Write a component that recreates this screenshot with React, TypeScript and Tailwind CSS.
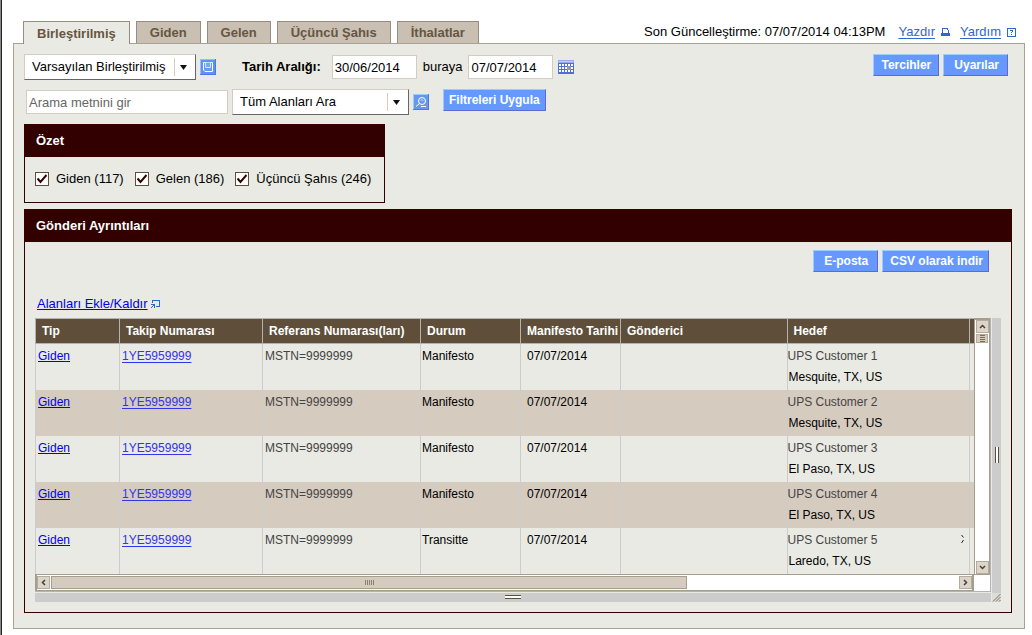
import { useState } from 'react';

interface Shipment {
  type: string;
  tracking: string;
  reference: string;
  status: string;
  date: string;
  sender: string;
  customer: string;
  city: string;
}

const tabs = ['Birleştirilmiş', 'Giden', 'Gelen', 'Üçüncü Şahıs', 'İthalatlar'];

const summary = [
  { id: 'outbound', label: 'Giden (117)' },
  { id: 'inbound', label: 'Gelen (186)' },
  { id: 'third', label: 'Üçüncü Şahıs (246)' },
];

const columns = [
  { title: 'Tip', width: 'w-[84px]' },
  { title: 'Takip Numarası', width: 'w-[143px]' },
  { title: 'Referans Numarası(ları)', width: 'w-[158px]' },
  { title: 'Durum', width: 'w-[100px]' },
  { title: 'Manifesto Tarihi', width: 'w-[100px]' },
  { title: 'Gönderici', width: '' },
  { title: 'Hedef', width: 'w-[182px]' },
];

const base = { type: 'Giden', tracking: '1YE5959999', reference: 'MSTN=9999999', date: '07/07/2014', sender: '' };

const shipments: Shipment[] = [
  { ...base, status: 'Manifesto', customer: 'UPS Customer 1', city: 'Mesquite, TX, US' },
  { ...base, status: 'Manifesto', customer: 'UPS Customer 2', city: 'Mesquite, TX, US' },
  { ...base, status: 'Manifesto', customer: 'UPS Customer 3', city: 'El Paso, TX, US' },
  { ...base, status: 'Manifesto', customer: 'UPS Customer 4', city: 'El Paso, TX, US' },
  { ...base, status: 'Transitte', customer: 'UPS Customer 5', city: 'Laredo, TX, US' },
];

function ActionButton({ children, className = 'px-[7px]' }: { children: string; className?: string }) {
  return (
    <button
      type="button"
      className={`h-[22px] whitespace-nowrap border border-t-[#99ccff] border-l-[#99ccff] border-r-[#6666cc] border-b-[#6666cc] bg-[#6699ff] text-xs leading-5 font-bold text-white ${className}`}
    >
      {children}
    </button>
  );
}

function SelectBox({ label, option, width }: { label: string; option: string; width: string }) {
  return (
    <div className={`relative h-[26px] ${width}`}>
      <select
        aria-label={label}
        className="h-full w-full appearance-none border border-t-[#d5cbbf] border-l-[#d5cbbf] border-r-[#666] border-b-[#666] bg-white pr-7 pl-[7px] text-[13px] text-black"
      >
        <option>{option}</option>
      </select>
      <div className="pointer-events-none absolute inset-y-1 right-1 flex w-[18px] items-center justify-center border-l border-[#d5cbbf]">
        <svg width="7" height="5" viewBox="0 0 7 5">
          <path d="M0 0H7L3.5 5Z" fill="#111" />
        </svg>
      </div>
    </div>
  );
}

function SaveIcon() {
  return (
    <svg width="16" height="16" viewBox="0 0 16 16">
      <rect width="16" height="16" fill="#4a7bd8" />
      <rect width="15" height="15" fill="#99bbff" />
      <rect x="1" y="1" width="14" height="14" fill="#5f92f8" />
      <path d="M3.5 3.5H12.5V12.5H5L3.5 11Z" fill="#6699ff" stroke="#fff" />
      <path d="M5.5 3.5V8.5H10.5V3.5" fill="#7aa6fb" stroke="#d6e4ff" />
    </svg>
  );
}

function SearchIcon() {
  return (
    <svg width="16" height="16" viewBox="0 0 16 16">
      <rect width="16" height="16" fill="#4a7bd8" />
      <rect width="15" height="15" fill="#99ccff" />
      <rect x="1" y="1" width="14" height="14" fill="#6699ee" />
      <circle cx="9" cy="7" r="3.5" fill="none" stroke="#fff" />
      <path d="M8 6.5C8 5.500 10 5.500 10 6.500" fill="none" stroke="#d6e4ff" />
      <path d="M6.5 9.5L3 12.5M8 12.5H13" stroke="#fff" />
    </svg>
  );
}

function CalendarIcon() {
  return (
    <svg width="16" height="14" viewBox="0 0 16 14" shapeRendering="crispEdges">
      <rect width="16" height="14" fill="#4f6fd8" />
      <rect width="16" height="3" fill="#99aaee" />
      <rect x="1" y="1" width="14" height="1" fill="#bbccff" />
      {[4, 7, 10].map((y) => (
        <path key={y} d={`M1 ${y + 1}H15`} stroke="#fff" strokeWidth="2" strokeDasharray="2 1" />
      ))}
      <rect x="9" y="6" width="4" height="4" fill="#999" />
    </svg>
  );
}

function Arrow({ d }: { d: string }) {
  return (
    <svg width="7" height="7" viewBox="0 0 7 7">
      <path d={d} fill="none" stroke="#4a4030" strokeWidth="1.5" />
    </svg>
  );
}

const arrowButton = 'flex size-[13px] shrink-0 items-center justify-center border border-[#b5ab9b] bg-[#dcd5cb]';

function VerticalScroll() {
  return (
    <div className="flex w-4 shrink-0 flex-col items-center justify-between border-x border-t-2 border-b border-[#a69d8c] bg-white">
      <div className="flex flex-col items-center gap-px">
        <button type="button" aria-label="Yukarı" className={arrowButton}><Arrow d="M1 5L3.5 2.5L6 5" /></button>
        <svg width="12" height="9" viewBox="0 0 12 9" shapeRendering="crispEdges">
          <rect width="12" height="9" fill="#b5ab9b" />
          <rect x="1" y="1" width="10" height="7" fill="#d5cbbf" />
          <path d="M4 1.5H9M4 3.5H9M4 5.5H9M4 7.5H9" stroke="#7c705c" />
        </svg>
      </div>
      <button type="button" aria-label="Aşağı" className={arrowButton}><Arrow d="M1 2L3.5 4.5L6 2" /></button>
    </div>
  );
}

function HorizontalScroll() {
  return (
    <div className="flex h-[17px] items-center border-y border-l-2 border-r-2 border-[#a69d8c] bg-white">
      <button type="button" aria-label="Sola" className={arrowButton}><Arrow d="M5 1L2.5 3.5L5 6" /></button>
      <div className="flex h-full grow items-center">
        <div className="ml-px flex h-[13px] w-[70%] items-center justify-center border border-[#a69d8c] bg-[#d5cbbf]">
          <svg width="9" height="5" viewBox="0 0 9 5" shapeRendering="crispEdges">
            <path d="M.5 0V5M2.5 0V5M4.5 0V5M6.5 0V5M8.5 0V5" stroke="#8a7f6d" />
          </svg>
        </div>
      </div>
      <button type="button" aria-label="Sağa" className={arrowButton}><Arrow d="M2 1L4.5 3.5L2 6" /></button>
    </div>
  );
}

function ShipmentTable() {
  return (
    <table className="w-full table-fixed border-collapse text-xs">
      <thead>
        <tr className="h-[25px] bg-[#5f4f3a] text-left leading-4 text-white">
          {columns.map((c) => (
            <th key={c.title} className={`border border-[#b3b3b3] p-0 pl-[6px] font-bold whitespace-nowrap ${c.width}`}>
              {c.title}
            </th>
          ))}
          <th className="w-[5px] border-y border-[#b3b3b3] p-0" />
        </tr>
      </thead>
      <tbody>
        {shipments.map((s, i) => (
          <tr key={s.customer} className="h-[46px] align-top leading-[21px] even:bg-[#d5cbbf]">
            <td className="border-x border-[#ccc] p-0 pt-[2px] pl-[2px]">
              <a href="#detay" className="text-[#0000ee] underline">{s.type}</a>
            </td>
            <td className="border-x border-[#ccc] p-0 pt-[2px] pl-[2px]">
              <a href="#takip" className="text-[#3333ee] underline underline-offset-2">{s.tracking}</a>
            </td>
            <td className="border-x border-[#ccc] p-0 pt-[2px] pl-[2px] text-[#444]">{s.reference}</td>
            <td className="border-x border-[#ccc] p-0 pt-[2px] pl-px">{s.status}</td>
            <td className="border-x border-[#ccc] p-0 pt-[2px] pl-[6px]">{s.date}</td>
            <td className="border-x border-[#ccc] p-0">{s.sender}</td>
            <td className="border-x border-[#ccc] p-0 pt-[2px]">
              <div className="flex justify-between">
                <p className="text-[#444]">{s.customer}</p>
                {i === 4 && (
                  <svg className="mt-1 mr-1" width="4" height="10" viewBox="0 0 4 10">
                    <path d="M.5 1L2.5 3.5M2.5 6L.5 9" stroke="#222" />
                  </svg>
                )}
              </div>
              <p className="pl-px">{s.city}</p>
            </td>
            <td className="p-0" />
          </tr>
        ))}
      </tbody>
    </table>
  );
}

export default function App() {
  const [active, setActive] = useState(0);

  return (
    <div className="flex min-h-screen bg-white font-['Liberation_Sans',Arial,sans-serif] text-[13px] leading-4 text-black">
      <div className="w-[2px] shrink-0 border-r border-[#222] bg-[#888]" />
      <div className="min-w-0 grow pt-[21px] pr-[7px] pb-[6px] pl-[11px]">
        {/* Tabs and page links */}
        <div className="flex justify-between">
          <div className="flex h-[22px] gap-[6px] pl-[10px]">
            {tabs.map((t, i) => (
              <button
                key={t}
                type="button"
                onClick={() => setActive(i)}
                className={`relative border border-b-0 border-[#978d7e] px-[13px] font-bold text-[#665640] ${i === active ? 'h-[23px] bg-[#e9eae3] pt-px' : 'h-[22px] bg-[#c9bfb3]'}`}
              >
                {t}
              </button>
            ))}
          </div>
          <div className="flex items-center pr-[9px]">
            <span className="mr-[13px]">Son Güncelleştirme: 07/07/2014 04:13PM</span>
            <a href="#yazdir" className="mr-[6px] text-[#3366cc] underline underline-offset-2">Yazdır</a>
            <svg className="mr-[10px]" width="9" height="8" viewBox="0 0 9 8" shapeRendering="crispEdges">
              <rect x="1" y="0" width="6" height="6" fill="#3366cc" />
              <rect x="2" y="1" width="4" height="4" fill="#fff" />
              <rect x="6" y="2" width="2" height="4" fill="#3366cc" />
              <rect x="5" y="2" width="2" height="3" fill="#fff" />
              <rect x="0" y="5" width="9" height="3" fill="#3366cc" />
            </svg>
            <a href="#yardim" className="mr-[6px] text-[#3366cc] underline underline-offset-2">Yardım</a>
            <svg width="9" height="9" viewBox="0 0 9 9" shapeRendering="crispEdges">
              <rect width="9" height="9" fill="#3366cc" />
              <rect x="1" y="1" width="7" height="7" fill="#fff" />
              <path d="M3 2h3v1h-3zM5 3h1v1h-1zM4 4h1v1h-1zM4 6h1v1h-1z" fill="#3366cc" />
            </svg>
          </div>
        </div>

        <div className="border border-[#aba190] bg-[#e9eae3] px-[10px] pt-[10px] pb-[15px]">
          {/* Filters */}
          <div className="flex items-start justify-between pr-[6px]">
            <div className="flex items-center">
              <SelectBox label="Görünüm" option="Varsayılan Birleştirilmiş" width="w-[172px]" />
              <button type="button" aria-label="Kaydet" className="ml-1"><SaveIcon /></button>
              <label htmlFor="from" className="ml-[26px] font-bold">Tarih Aralığı:</label>
              <input id="from" defaultValue="30/06/2014" className="ml-[11px] h-6 w-[85px] border border-[#d5cbbf] bg-white pl-[2px]" />
              <label htmlFor="to" className="mx-[6px]">buraya</label>
              <input id="to" defaultValue="07/07/2014" className="h-6 w-[85px] border border-[#d5cbbf] bg-white pl-[2px]" />
              <button type="button" aria-label="Takvim" className="ml-[5px]"><CalendarIcon /></button>
            </div>
            <div className="flex gap-1">
              <ActionButton>Tercihler</ActionButton>
              <ActionButton className="pr-2 pl-[10px]">Uyarılar</ActionButton>
            </div>
          </div>

          <div className="mt-[9px] flex items-center pl-[2px]">
            <input
              aria-label="Arama"
              placeholder="Arama metnini gir"
              className="mr-1 h-6 w-[202px] border border-[#d5cbbf] bg-white pl-[2px] placeholder:text-[#666]"
            />
            <SelectBox label="Arama alanı" option="Tüm Alanları Ara" width="w-[177px]" />
            <button type="button" aria-label="Ara" className="mr-[14px] ml-1"><SearchIcon /></button>
            <div className="self-start"><ActionButton className="px-[5px]">Filtreleri Uygula</ActionButton></div>
          </div>

          {/* Summary */}
          <section className="mt-[9px] w-[361px] border border-[#330000]">
            <h2 className="bg-[#330000] px-[11px] py-2 font-bold text-white">Özet</h2>
            <div className="flex gap-[11px] px-[10px] pt-[14px] pb-[15px]">
              {summary.map((s) => (
                <label key={s.id} htmlFor={s.id} className="relative flex items-center gap-[7px] whitespace-nowrap">
                  <input id={s.id} type="checkbox" defaultChecked className="peer size-[14px] appearance-none border border-[#5f4f3a] bg-white" />
                  <svg className="pointer-events-none absolute left-[2px] hidden peer-checked:block" width="10" height="10" viewBox="0 0 10 10">
                    <path d="M.5 4.5L3.5 8L9.5 1" fill="none" stroke="#330000" strokeWidth="2" />
                  </svg>
                  {s.label}
                </label>
              ))}
            </div>
          </section>

          {/* Shipment details */}
          <section className="mt-[6px] mr-[2px] border border-[#330000]">
            <h2 className="bg-[#330000] px-[11px] py-2 font-bold text-white">Gönderi Ayrıntıları</h2>
            <div className="px-[10px] pt-2 pb-[10px]">
              <div className="flex justify-end gap-1 pr-3">
                <ActionButton className="pr-[9px] pl-[10px]">E-posta</ActionButton>
                <ActionButton className="pr-[5px] pl-[7px]">CSV olarak indir</ActionButton>
              </div>
              <div className="mt-6 mb-[6px] flex items-center gap-[3px] pl-[2px]">
                <a href="#alanlar" className="text-[#0000ee] underline">Alanları Ekle/Kaldır</a>
                <svg width="9" height="9" viewBox="0 0 9 9" shapeRendering="crispEdges">
                  <path d="M1 0h8v7h-4v-1h3v-5h-6v2h-1z" fill="#3366cc" />
                  <path d="M0 4h4v4h-1v-2h-1v1h-1v1h-1v-1h1v-1h1v-1h-2z" fill="#3366cc" />
                </svg>
              </div>

              <div className="flex gap-px">
                <div className="min-w-0 grow">
                  <div className="flex border-r border-b border-[#b3b3b3]">
                    <div className="min-w-0 grow">
                      <ShipmentTable />
                      <HorizontalScroll />
                    </div>
                    <div className="flex flex-col bg-white pb-4">
                      <div className="flex grow"><VerticalScroll /></div>
                    </div>
                  </div>
                  <div className="mt-px flex h-[9px] items-center justify-center bg-[#ccc]">
                    <div className="h-1 w-4 border-y border-[#5f4f3a] bg-white" />
                  </div>
                </div>
                <div className="flex w-[9px] flex-col bg-[#ccc]">
                  <div className="flex grow items-center justify-center">
                    <div className="h-4 w-1 border-x border-[#5f4f3a] bg-white" />
                  </div>
                  <svg width="9" height="9" viewBox="0 0 9 9">
                    <rect width="9" height="9" fill="#ddddd8" />
                    <path d="M1 8.5L8.5 1M4 8.5L8.5 4M7 8.5L8.5 7" stroke="#7c705c" />
                  </svg>
                </div>
              </div>
            </div>
          </section>
        </div>
      </div>
    </div>
  );
}
